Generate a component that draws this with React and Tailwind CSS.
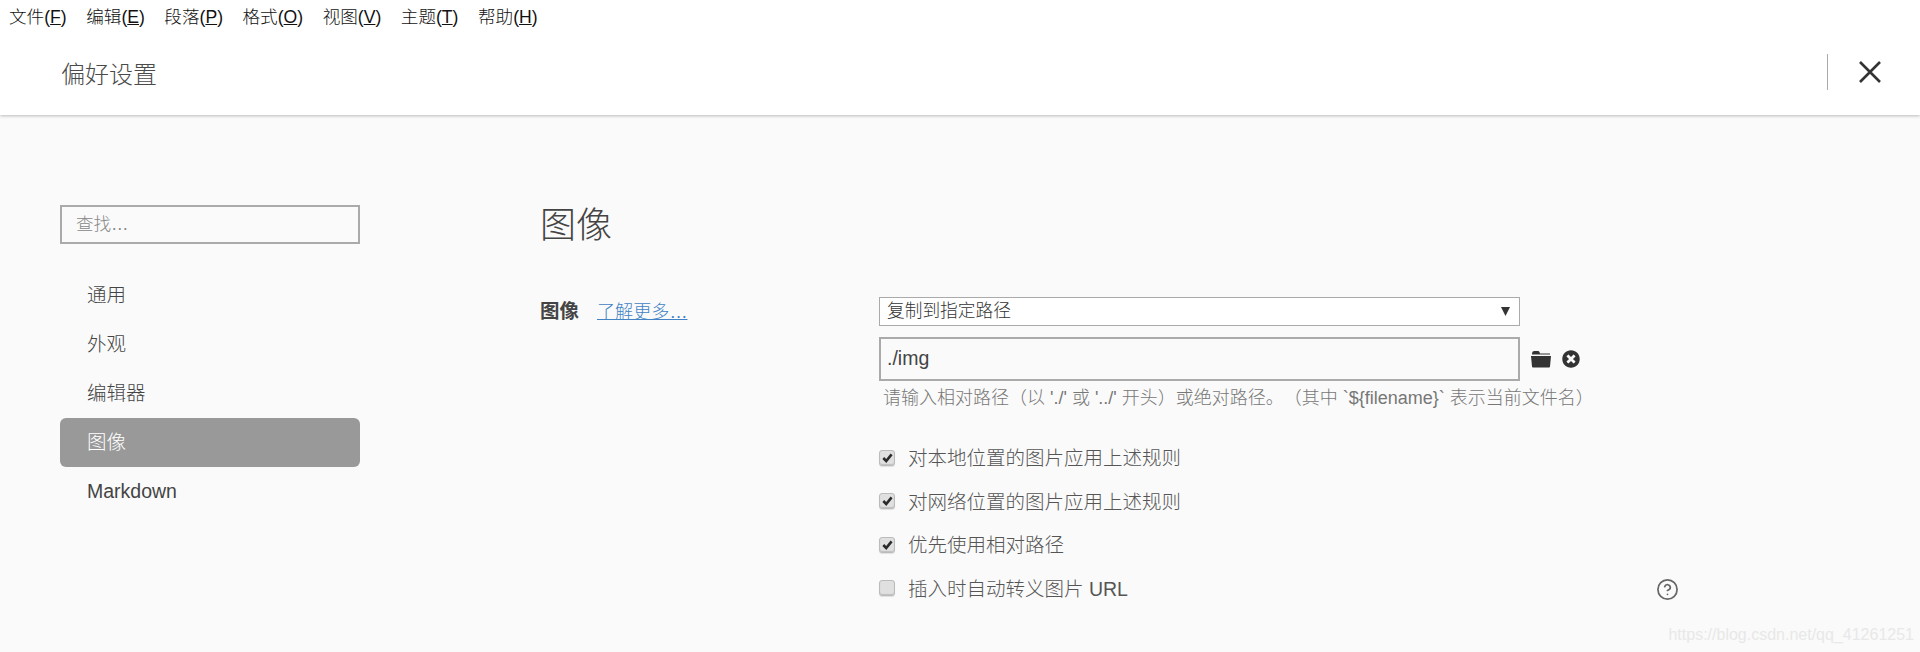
import React from "react";
import { FaTimesCircle } from "react-icons/fa";
import { CircleHelp } from "lucide-react";

const menus = [["文件","F"],["编辑","E"],["段落","P"],["格式","O"],["视图","V"],["主题","T"],["帮助","H"]];
const navItems = ["通用","外观","编辑器","图像","Markdown"];
const checks = [["对本地位置的图片应用上述规则",true],["对网络位置的图片应用上述规则",true],["优先使用相对路径",true],["插入时自动转义图片 URL",false]];

function Check({ on }) {
  return (
    <span className="w-[16px] h-[16px] mb-[2px] rounded-[3px] border border-[#bbb] bg-[#e0e0e0] shadow-[inset_0_-1px_1px_rgba(0,0,0,0.15),0_1px_1px_rgba(0,0,0,0.1)] flex items-center justify-center shrink-0">
      {on && (
        <svg width="11" height="10" viewBox="0 0 11 10">
          <path d="M1.3 5 L4.2 8 L9.6 1.4" fill="none" stroke="#2b2b2b" strokeWidth="2.6" />
        </svg>
      )}
    </span>
  );
}

export default function App() {
  return (
    <div className="relative h-[652px] overflow-hidden bg-[#fafafa] text-[#444] font-light font-['Liberation_Sans','Noto_Sans_CJK_SC',sans-serif]">
      <header className="h-[115px] bg-white shadow-[0_1px_3px_rgba(0,0,0,0.25)] flex flex-col">
        <nav className="h-[34px] flex items-center pl-[9px] gap-[19.5px] text-[17.6px] text-[#111]">
          {menus.map(([n, k]) => (
            <span key={k}>{n}(<span className="underline">{k}</span>)</span>
          ))}
        </nav>
        <div className="flex-1 flex items-center pl-[61px] pr-[39px]">
          <h1 className="text-[24px] font-light text-[#4a4a4a] flex-1">偏好设置</h1>
          <span className="w-[1px] h-[36px] bg-[#aaa] mr-[31px] mb-[5px]"></span>
          <svg className="mb-[5px]" width="22" height="22" viewBox="0 0 22 22">
            <path d="M1 1 L21 21 M21 1 L1 21" stroke="#333" strokeWidth="2.6" />
          </svg>
        </div>
      </header>

      <div className="flex pl-[60px]">
        <aside className="w-[300px] pt-[90px] shrink-0">
          <div className="h-[39px] border-2 border-[#aaa] flex items-center pl-[14px] text-[17.5px] text-[#888]">查找…</div>
          <ul className="mt-[27px]">
            {navItems.map((n) => (
              <li key={n} className={`h-[49px] flex items-center pl-[27px] text-[19.5px] rounded-[6px] ${n === "图像" ? "bg-[#999] text-white" : ""}`}>{n}</li>
            ))}
          </ul>
        </aside>

        <main className="pl-[180px] pt-[86px] flex-1">
          <h2 className="text-[36px] leading-[50px] font-light text-[#444]">图像</h2>
          <div className="flex mt-[46px]">
            <div className="w-[339px] shrink-0 flex items-start text-[19.5px]">
              <span className="font-bold">图像</span>
              <a className="ml-[18px] text-[#4183c4] underline text-[18.1px] leading-[30px]">了解更多…</a>
            </div>
            <div className="flex-1">
              <div className="relative w-[641px] h-[29px] bg-white border border-[#aaa] flex items-center pl-[7px] text-[17.7px] text-[#333]">
                复制到指定路径
                <svg className="absolute right-[9px] top-[9px]" width="9" height="9" viewBox="0 0 9 9"><path d="M0 0 H9 L4.5 9 Z" fill="#333" /></svg>
              </div>
              <div className="flex items-center mt-[11px]">
                <div className="w-[641px] h-[44px] border-2 border-[#aaa] flex items-center pl-[6px] pb-[1px] text-[19.5px]">./img</div>
                <svg className="ml-[11px]" width="20" height="17" viewBox="0 0 20 17" fill="#333">
                  <path d="M1 2.5 Q1 0 3 0 H7 Q8 0 8.5 1 L9 2.5 H19 V3.5 H1 Z" />
                  <path d="M0 5 H20 L19 15.5 Q19 16.5 18 16.5 H2 Q1 16.5 1 15.5 Z" />
                </svg>
                <FaTimesCircle className="ml-[11px] text-[#333]" size={18} />
              </div>
              <p className="pl-[4px] mt-[4px] text-[18px] leading-[26px] text-[#777] [text-spacing-trim:space-all]">请输入相对路径（以 './' 或 '../' 开头）或绝对路径。（其中 `{"${filename}"}` 表示当前文件名）</p>
              <div className="mt-[26px] w-[800px]">
                {checks.map(([t, on], i) => (
                  <div key={t} className="h-[43.5px] flex items-center text-[19.5px] text-[#555]">
                    <Check on={on} />
                    <span className="ml-[13px] flex-1">{t}</span>
                    {i === 3 && <CircleHelp className="text-[#666]" size={23} strokeWidth={1.8} />}
                  </div>
                ))}
              </div>
            </div>
          </div>
        </main>
      </div>

      <span className="absolute right-[6px] bottom-[5px] text-[16px] text-[#e8e8e8]">https://blog.csdn.net/qq_41261251</span>
    </div>
  );
}
